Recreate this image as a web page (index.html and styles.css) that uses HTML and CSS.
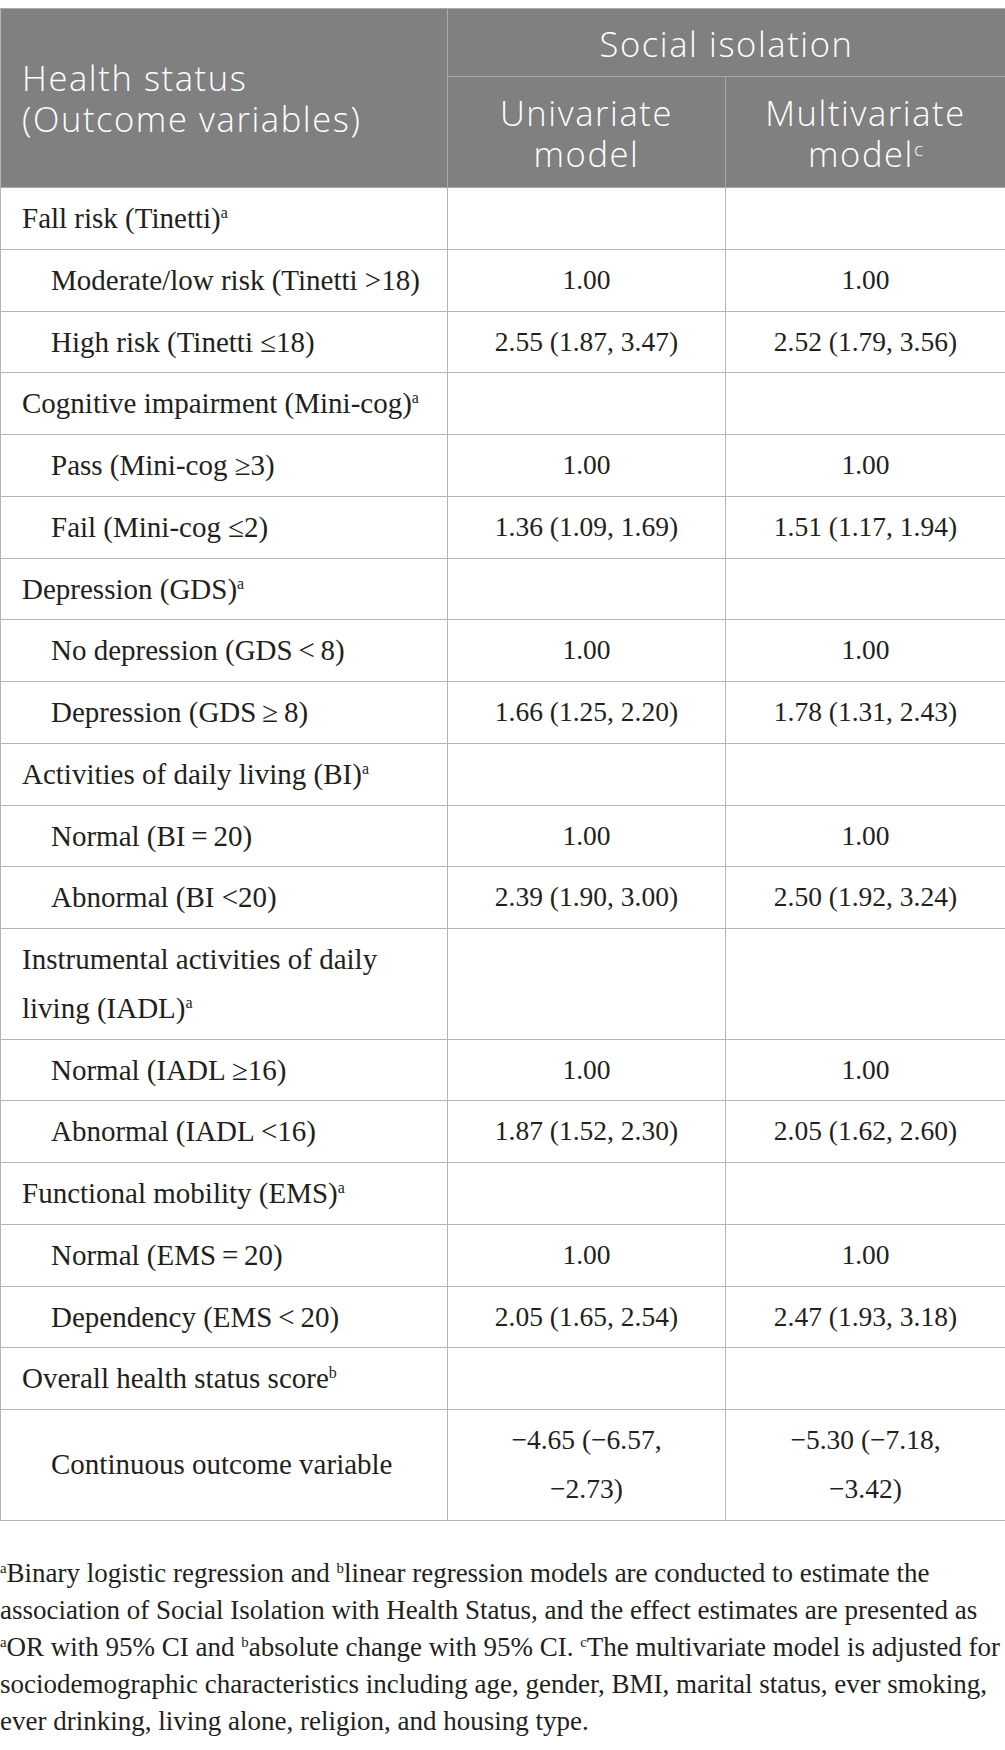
FILE: index.html
```html
<!DOCTYPE html>
<html lang="en">
<head>
<meta charset="utf-8">
<title>Social isolation and health status</title>
<link rel="stylesheet" href="styles.css">
</head>
<body>
<div class="page">
  <table class="tbl">
    <colgroup><col class="c1"><col class="c2"><col class="c3"></colgroup>
    <thead>
      <tr>
        <th rowspan="2" class="hlabel">Health status<br>(Outcome variables)</th>
        <th colspan="2" class="hgroup">Social isolation</th>
      </tr>
      <tr>
        <th class="hcol">Univariate<br>model</th>
        <th class="hcol">Multivariate<br>model<sup class="hsup">c</sup></th>
      </tr>
    </thead>
    <tbody>
      <tr><td>Fall risk (Tinetti)<sup>a</sup></td><td></td><td></td></tr>
      <tr><td class="sub">Moderate/low risk (Tinetti &gt;18)</td><td>1.00</td><td>1.00</td></tr>
      <tr><td class="sub">High risk (Tinetti ≤18)</td><td>2.55 (1.87, 3.47)</td><td>2.52 (1.79, 3.56)</td></tr>
      <tr><td>Cognitive impairment (Mini-cog)<sup>a</sup></td><td></td><td></td></tr>
      <tr><td class="sub">Pass (Mini-cog ≥3)</td><td>1.00</td><td>1.00</td></tr>
      <tr><td class="sub">Fail (Mini-cog ≤2)</td><td>1.36 (1.09, 1.69)</td><td>1.51 (1.17, 1.94)</td></tr>
      <tr><td>Depression (GDS)<sup>a</sup></td><td></td><td></td></tr>
      <tr><td class="sub">No depression (GDS&thinsp;&lt;&thinsp;8)</td><td>1.00</td><td>1.00</td></tr>
      <tr><td class="sub">Depression (GDS&thinsp;≥&thinsp;8)</td><td>1.66 (1.25, 2.20)</td><td>1.78 (1.31, 2.43)</td></tr>
      <tr><td>Activities of daily living (BI)<sup>a</sup></td><td></td><td></td></tr>
      <tr><td class="sub">Normal (BI&thinsp;=&thinsp;20)</td><td>1.00</td><td>1.00</td></tr>
      <tr><td class="sub">Abnormal (BI &lt;20)</td><td>2.39 (1.90, 3.00)</td><td>2.50 (1.92, 3.24)</td></tr>
      <tr><td>Instrumental activities of daily living (IADL)<sup>a</sup></td><td></td><td></td></tr>
      <tr><td class="sub">Normal (IADL ≥16)</td><td>1.00</td><td>1.00</td></tr>
      <tr><td class="sub">Abnormal (IADL &lt;16)</td><td>1.87 (1.52, 2.30)</td><td>2.05 (1.62, 2.60)</td></tr>
      <tr><td>Functional mobility (EMS)<sup>a</sup></td><td></td><td></td></tr>
      <tr><td class="sub">Normal (EMS&thinsp;=&thinsp;20)</td><td>1.00</td><td>1.00</td></tr>
      <tr><td class="sub">Dependency (EMS&thinsp;&lt;&thinsp;20)</td><td>2.05 (1.65, 2.54)</td><td>2.47 (1.93, 3.18)</td></tr>
      <tr><td>Overall health status score<sup>b</sup></td><td></td><td></td></tr>
      <tr><td class="sub">Continuous outcome variable</td><td>−4.65 (−6.57,<br>−2.73)</td><td>−5.30 (−7.18,<br>−3.42)</td></tr>
    </tbody>
  </table>
  <p class="note"><sup>a</sup>Binary logistic regression and <sup>b</sup>linear regression models are conducted to estimate the association of Social Isolation with Health Status, and the effect estimates are presented as <sup>a</sup>OR with 95% CI and <sup>b</sup>absolute change with 95% CI. <sup>c</sup>The multivariate model is adjusted for sociodemographic characteristics including age, gender, BMI, marital status, ever smoking, ever drinking, living alone, religion, and housing type.</p>
</div>
</body>
</html>
```
FILE: styles.css
```css
html, body {
  margin: 0;
  padding: 0;
  background: #ffffff;
}

.page {
  padding-top: 8px;
  width: 1005px;
}

.tbl {
  width: 1005px;
  border-collapse: collapse;
  table-layout: fixed;
  font-family: "Liberation Serif", "Times New Roman", serif;
  font-size: 27.5px;
  color: #231f20;
}

.c1 { width: 447px; }
.c2 { width: 278px; }
.c3 { width: 280px; }

.tbl thead th {
  background: #808080;
  color: #ffffff;
  font-family: "Open Sans", "Noto Sans", sans-serif;
  font-weight: 300;
  font-size: 34.5px;
  line-height: 41px;
  letter-spacing: 1.6px;
  border: 1px solid #a9a9a9;
  text-align: center;
  vertical-align: middle;
  padding: 0 8px;
}

.tbl thead th.hlabel {
  text-align: left;
  padding-left: 21px;
  border-left-color: #b4b4b4;
}

.tbl thead th.hgroup {
  height: 65px;
  padding-top: 2px;
}

.tbl thead th.hcol {
  height: 109px;
  padding-top: 1px;
}

.hsup {
  font-size: 0.55em;
  line-height: 0;
  vertical-align: 0.85em;
  letter-spacing: 0;
}

.tbl td {
  border: 1px solid #b4b4b4;
  padding: 6px 10px;
  line-height: 48.75px;
  text-align: center;
  vertical-align: middle;
}

.tbl td:first-child {
  text-align: left;
  padding-left: 21px;
  font-size: 29px;
}

.tbl td.sub {
  padding-left: 50px;
}

.tbl sup,
.note sup {
  font-size: 0.55em;
  line-height: 0;
  vertical-align: 0.6em;
}

.note {
  margin: 34px 0 0;
  font-family: "Liberation Serif", "Times New Roman", serif;
  font-size: 27px;
  line-height: 37px;
  color: #231f20;
}
```
